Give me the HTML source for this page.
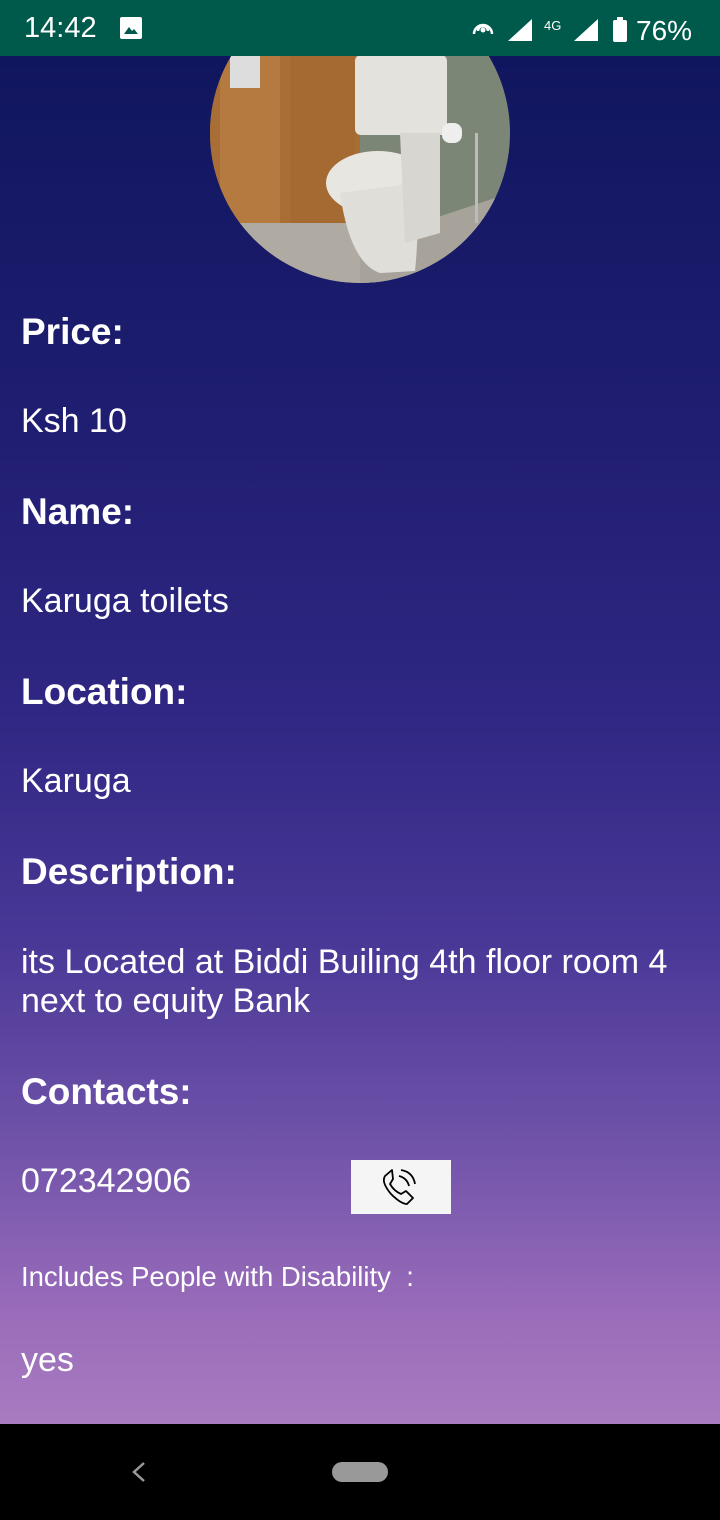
<!DOCTYPE html>
<html><head><meta charset="utf-8"><style>
*{margin:0;padding:0;box-sizing:border-box}
body{width:720px;height:1520px;position:relative;overflow:hidden;font-family:"Liberation Sans",sans-serif;color:#fff;background:#000}
.bg{position:absolute;left:0;top:56px;width:720px;height:1368px;background:linear-gradient(#10165e 0%,#1e1d70 25%,#2f2783 48%,#4a3897 65%,#7154aa 80%,#9a6cba 92%,#a87bc0 100%)}
.sb{position:absolute;left:0;top:0;width:720px;height:56px;background:#005a4c}
.t{position:absolute;left:21px;white-space:nowrap;line-height:40px}
.h{font-weight:bold;font-size:37px}
.r{font-size:34px}
</style></head><body>
<div class="bg"></div>
<svg style="position:absolute;left:210px;top:-17px" width="300" height="300" viewBox="0 0 300 300">
<defs><clipPath id="c"><circle cx="150" cy="150" r="150"/></clipPath></defs>
<g clip-path="url(#c)">
<rect width="300" height="300" fill="#7c8676"/>
<rect x="0" y="0" width="150" height="260" fill="#a86e35"/>
<rect x="10" y="70" width="60" height="180" fill="#b47a40"/>
<rect x="80" y="70" width="65" height="200" fill="#a46a32"/>
<rect x="0" y="240" width="300" height="60" fill="#b0aba2"/>
<path d="M150 260 L300 210 L300 300 L150 300Z" fill="#a8a39a"/>
<rect x="145" y="72" width="92" height="80" rx="6" fill="#e4e2dc"/>
<ellipse cx="168" cy="200" rx="52" ry="32" fill="#e8e6e0"/>
<path d="M130 210 Q140 280 170 290 L205 288 Q210 240 205 200Z" fill="#e0ded8"/>
<path d="M190 150 L230 150 L230 250 L195 260Z" fill="#d8d6d0"/>
<rect x="232" y="140" width="20" height="20" rx="8" fill="#eee"/>
<rect x="265" y="150" width="3" height="90" fill="#bbb"/>
<rect x="20" y="70" width="30" height="35" fill="#ddd"/>
</g></svg>
<div class="sb"></div>
<div style="position:absolute;left:24px;top:12px;font-size:29px;line-height:32px">14:42</div>
<div style="position:absolute;left:120px;top:17px;width:22px;height:22px;background:#fff;border-radius:2px"><svg width="22" height="22"><path d="M4 17 L9 10 L12 14 L14 12 L18 17Z" fill="#005a4c"/></svg></div>
<svg style="position:absolute;left:468px;top:14px" width="230" height="30">
<path d="M10 17 a5 5 0 1 1 10 0 M6 20 a9 9 0 1 1 18 0" stroke="#fff" stroke-width="2.5" fill="none"/><circle cx="15" cy="16" r="2.5" fill="#fff"/>
<path d="M40 27 L64 5 L64 27Z" fill="#fff"/>
<text x="76" y="16" font-size="13" fill="#fff" font-family="Liberation Sans">4G</text>
<path d="M106 27 L130 5 L130 27Z" fill="#fff"/>
<rect x="145" y="6" width="14" height="22" rx="2" fill="#fff"/><rect x="149" y="3" width="6" height="4" fill="#fff"/>
<text x="168" y="26" font-size="28" fill="#fff" font-family="Liberation Sans">76%</text>
</svg>
<div class="t h" style="top:312px">Price:</div>
<div class="t r" style="top:401px">Ksh 10</div>
<div class="t h" style="top:492px">Name:</div>
<div class="t r" style="top:581px">Karuga toilets</div>
<div class="t h" style="top:672px">Location:</div>
<div class="t r" style="top:761px">Karuga</div>
<div class="t h" style="top:852px">Description:</div>
<div class="t r" style="top:942px">its Located at Biddi Builing 4th floor room 4</div>
<div class="t r" style="top:981px">next to equity Bank</div>
<div class="t h" style="top:1072px">Contacts:</div>
<div class="t r" style="top:1161px">072342906</div>
<div style="position:absolute;left:351px;top:1160px;width:100px;height:54px;background:#f5f5f5">
<svg width="100" height="54"><path d="M41 10 L34 16 Q30 22 40 34 Q50 44 56 44 L62 38 L55 31 L50 34 Q43 31 39 24 L42 19Z" stroke="#000" stroke-width="1.8" fill="none" stroke-linejoin="round"/><path d="M48 16 Q56 18 58 26 M50 10 Q62 12 64 24" stroke="#000" stroke-width="1.8" fill="none"/></svg></div>
<div class="t" style="top:1262px;font-size:27.5px;line-height:30px">Includes People with Disability&nbsp; :</div>
<div class="t r" style="top:1340px">yes</div>
<svg style="position:absolute;left:0;top:1424px" width="720" height="96">
<path d="M144 39 L134 48 L144 57" stroke="#999" stroke-width="2.5" fill="none"/>
<rect x="332" y="38" width="56" height="20" rx="10" fill="#999"/></svg>
</body></html>
